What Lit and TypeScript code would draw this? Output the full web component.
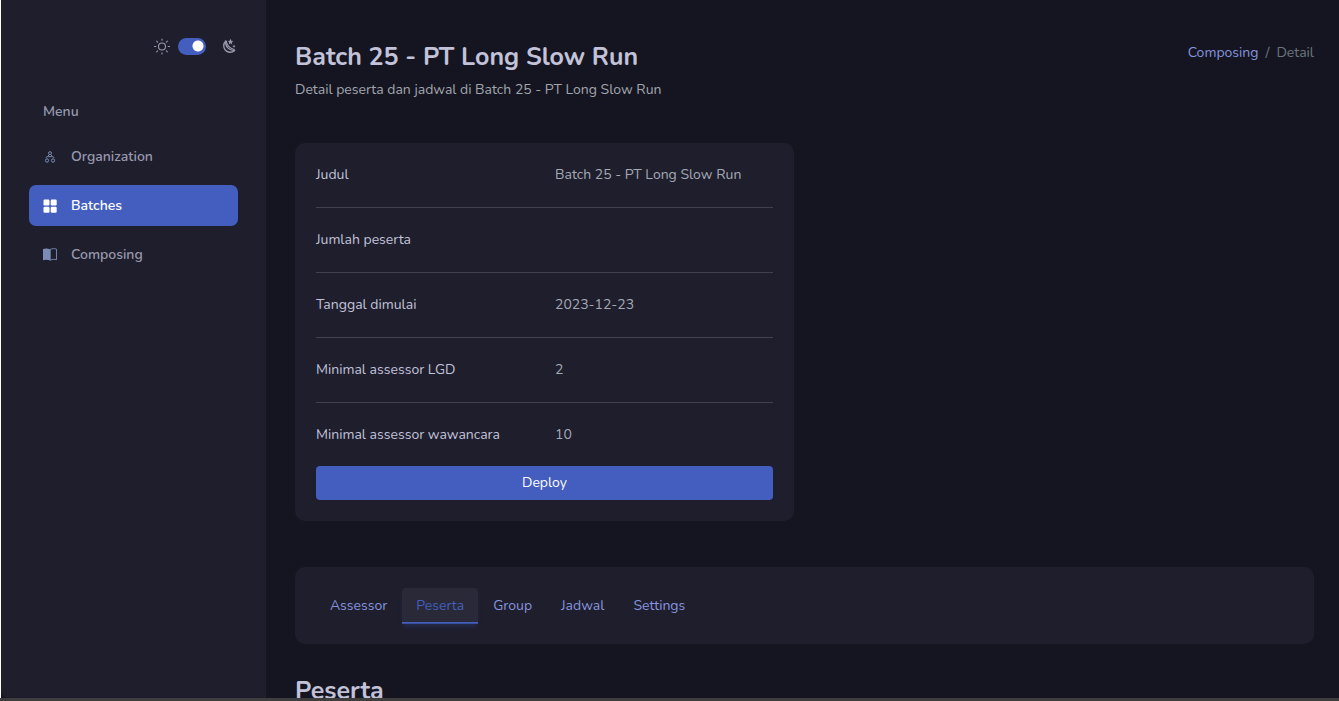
import { LitElement, html, css, svg } from "lit";
import { customElement, state } from "lit/decorators.js";

const organizationIcon = svg`
  <svg class="icon" viewBox="0 0 14 14" fill="none" stroke="currentColor" stroke-width="1" aria-hidden="true">
    <circle cx="7" cy="3.200" r="1.500" />
    <path d="M6.200 4.700L4.800 6.300M7.800 4.700l1.400 1.600M2.800 8c.3-1 1.100-1.300 2.300-1.300h3.800c1.200 0 2 .3 2.300 1.300" />
    <ellipse cx="4" cy="10.500" rx="1.600" ry="1.700" />
    <ellipse cx="10" cy="10.500" rx="1.600" ry="1.700" />
  </svg>`;

const gridIcon = svg`
  <svg class="icon" viewBox="0 0 14 14" fill="currentColor" aria-hidden="true">
    <rect x=".5" y=".5" width="6" height="6" rx="1.200" />
    <rect x="7.700" y=".5" width="6" height="6" rx="1.200" />
    <rect x=".5" y="7.700" width="6" height="6" rx="1.200" />
    <rect x="7.700" y="7.700" width="6" height="6" rx="1.200" />
  </svg>`;

const bookIcon = svg`
  <svg class="icon" viewBox="0 0 14 14" aria-hidden="true">
    <path fill="currentColor" d="M0 1.100C2 .3 5 .3 7.200 1.400V12.500C5 11.500 2 11.400 0 12.200z" />
    <path fill="none" stroke="currentColor" stroke-width=".9" d="M7.200 1.400c2-.9 4.400-1 6.300-.3v10.600c-1.900-.6-4.300-.5-6.300.5z" />
  </svg>`;

const sunIcon = svg`
  <svg class="mode-icon" viewBox="0 0 18 18" fill="none" stroke="currentColor" stroke-width="1.100" stroke-linecap="round" aria-hidden="true">
    <circle cx="9" cy="9.500" r="3.500" />
    <path d="M9 2v1.300M9 15.700V17M1.500 9.500h1.300M15.200 9.500h1.300M3.700 4.200l.9.900M13.400 13.900l.9.900M3.700 14.800l.9-.9M13.400 5.100l.9-.9" />
  </svg>`;

const moonIcon = svg`
  <svg class="mode-icon" viewBox="0 0 18 18" aria-hidden="true">
    <path fill="none" stroke="currentColor" stroke-width="1.400" stroke-linejoin="round" d="M5.800 3.900A6.500 6.500 0 1 0 14.700 13.500C9.200 13.900 4.800 9.300 5.800 3.900z" />
    <path fill="none" stroke="currentColor" stroke-width="1.100" d="M6.100 3.900C7.100 8.600 10 11.700 14.700 12.500" />
    <path fill="currentColor" d="M10.500 1.800l.8 1.900 2.100.2-1.600 1.400.5 2.100-1.800-1.100-1.800 1.100.5-2.100-1.600-1.400 2.100-.2zM14 7.600l.5 1.200 1.200.5-1.200.5-.5 1.200-.5-1.200-1.200-.5 1.200-.5z" />
  </svg>`;

const menu = [
  { label: "Organization", icon: organizationIcon },
  { label: "Batches", icon: gridIcon },
  { label: "Composing", icon: bookIcon },
];

const details = [
  ["Judul", "Batch 25 - PT Long Slow Run"],
  ["Jumlah peserta", ""],
  ["Tanggal dimulai", "2023-12-23"],
  ["Minimal assessor LGD", "2"],
  ["Minimal assessor wawancara", "10"],
];

const tabs = ["Assessor", "Peserta", "Group", "Jadwal", "Settings"];

@customElement("app-root")
export class AppRoot extends LitElement {
  @state() private activeTab = "Peserta";

  static styles = css`
    :host {
      display: block;
      height: 100vh;
      overflow: hidden;
      box-sizing: border-box;
      padding-left: 1px;
      border-bottom: 3px solid #3e3e3e;
      background: linear-gradient(to right, #fff 1px, #151521 1px);
      color: #c2c2d9;
      font: 14px/22px Nunito, Lato, sans-serif;
    }
    *, *::before, *::after { box-sizing: border-box; }
    h1, h2, p, dl, dd, ul, ol { margin: 0; padding: 0; }
    ul, ol { list-style: none; }
    a { text-decoration: none; color: #8793dd; }

    .shell {
      display: grid;
      grid-template-columns: 265px minmax(0, 1fr);
      height: 100%;
    }
    .sidebar {
      background: #1e1e2d;
      padding: 35px 28px;
      color: #9899ac;
      border-bottom-left-radius: 7px;
    }
    .modes {
      display: flex;
      align-items: center;
      justify-content: flex-end;
      gap: 7px;
      height: 22px;
    }
    .mode-icon { width: 18px; height: 18px; display: block; }
    .switch {
      appearance: none;
      width: 28px;
      height: 17px;
      margin: 0 7px 0 0;
      border-radius: 9px;
      background: radial-gradient(circle at 20px 8px, #fff 5px, #435ebe 6px);
    }
    .switch:not(:checked) { background: radial-gradient(circle at 8px 8px, #fff 5px, #4a4a5c 6px); }
    .menu-title {
      margin: 44px 14px 13px;
      font-size: 14px;
      line-height: 22px;
      font-weight: 600;
      color: #9899ac;
    }
    .menu { display: grid; gap: 8px; }
    .menu-link {
      display: flex;
      align-items: center;
      gap: 14px;
      height: 41px;
      padding: 0 14px;
      border-radius: 7px;
      color: #9899ac;
      font-weight: 600;
    }
    .icon { width: 14px; height: 14px; color: #7c8db5; }
    .menu-link.active { background: #435ebe; color: #fff; }
    .menu-link.active .icon { color: #fff; }

    .content {
      min-height: 0;
      overflow: hidden;
      padding: 42px 25px 0 29px;
    }
    .heading { display: flex; justify-content: space-between; margin-bottom: 42px; }
    h1, h2 { font-size: 25px; line-height: 31px; font-weight: 700; color: #c2c2d9; }
    .subtitle { margin-top: 6px; color: #a1a6ad; }
    .crumbs { display: flex; gap: 7px; color: #6c757d; }
    .card { background: #1e1e2d; border-radius: 10px; padding: 21px; }
    .columns { display: grid; grid-template-columns: 1fr 1fr; gap: 21px; margin-bottom: 46px; }
    .row {
      display: grid;
      grid-template-columns: 1fr 1fr;
      gap: 21px;
      line-height: 21px;
    }
    .row + .row { margin-top: 22px; padding-top: 21px; border-top: 1px solid #41424f; }
    dd { color: #a5a9b5; }
    .deploy {
      display: block;
      width: 100%;
      height: 34px;
      margin-top: 21px;
      border: 0;
      border-radius: 4px;
      background: #435ebe;
      color: #fff;
      font: inherit;
    }
    .tabs { display: flex; gap: 1px; margin-bottom: 32px; }
    .tab {
      height: 35px;
      padding: 0 14px;
      border: 0;
      border-radius: 4px 4px 0 0;
      background: none;
      color: #8793dd;
      font: inherit;
    }
    .tab[aria-selected="true"] {
      background: linear-gradient(to top, #435ebe 1px, #292937 1px);
      color: #435ebe;
      box-shadow: 0 1px 0 #3850a0, 0 5px 5px -2px rgba(67, 94, 190, 0.25);
    }
  `;

  render() {
    return html`
      <div class="shell">
        <aside class="sidebar">
          <div class="modes">
            ${sunIcon}
            <input class="switch" type="checkbox" role="switch" aria-label="Dark mode" checked />
            ${moonIcon}
          </div>
          <h2 class="menu-title">Menu</h2>
          <nav>
            <ul class="menu">
              ${menu.map(
                (item) => html`<li>
                  <a class="menu-link ${item.label === "Batches" ? "active" : ""}" href="#">${item.icon}<span>${item.label}</span></a>
                </li>`
              )}
            </ul>
          </nav>
        </aside>
        <main class="content">
          <header class="heading">
            <div>
              <h1>Batch 25 - PT Long Slow Run</h1>
              <p class="subtitle">Detail peserta dan jadwal di Batch 25 - PT Long Slow Run</p>
            </div>
            <nav>
              <ol class="crumbs">
                <li><a href="#">Composing</a></li>
                <li aria-hidden="true">/</li>
                <li>Detail</li>
              </ol>
            </nav>
          </header>
          <div class="columns">
            <section class="card">
              <dl>
                ${details.map(([term, value]) => html`<div class="row"><dt>${term}</dt><dd>${value}</dd></div>`)}
              </dl>
              <button class="deploy" type="button">Deploy</button>
            </section>
          </div>
          <div class="card tabs" role="tablist">
            ${tabs.map(
              (tab) => html`<button
                class="tab"
                type="button"
                role="tab"
                aria-selected=${this.activeTab === tab}
                @click=${() => (this.activeTab = tab)}
              >${tab}</button>`
            )}
          </div>
          <h2>${this.activeTab}</h2>
        </main>
      </div>
    `;
  }
}
